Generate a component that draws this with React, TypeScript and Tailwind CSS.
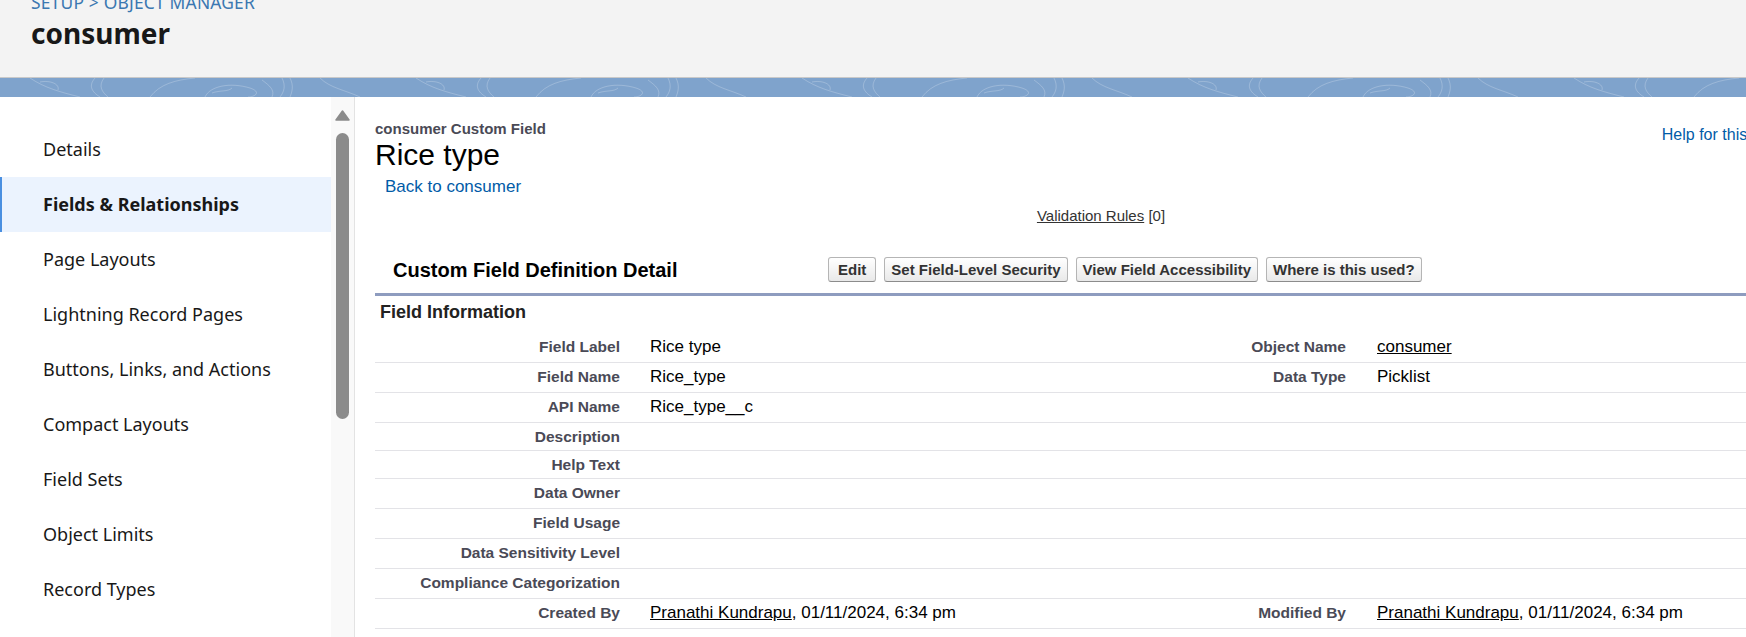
import React from 'react';

const navItems = [
  'Details',
  'Fields & Relationships',
  'Page Layouts',
  'Lightning Record Pages',
  'Buttons, Links, and Actions',
  'Compact Layouts',
  'Field Sets',
  'Object Limits',
  'Record Types',
];

type Row = {
  label: string;
  value?: React.ReactNode;
  label2?: string;
  value2?: React.ReactNode;
  h: string;
};

const created = (
  <>
    <span className="underline">Pranathi Kundrapu</span>, 01/11/2024, 6:34 pm
  </>
);

const rows: Row[] = [
  { label: 'Field Label', value: 'Rice type', label2: 'Object Name', value2: <span className="underline">consumer</span>, h: 'h-[30px]' },
  { label: 'Field Name', value: 'Rice_type', label2: 'Data Type', value2: 'Picklist', h: 'h-[30px]' },
  { label: 'API Name', value: 'Rice_type__c', h: 'h-[30px]' },
  { label: 'Description', h: 'h-[28px]' },
  { label: 'Help Text', h: 'h-[28px]' },
  { label: 'Data Owner', h: 'h-[30px]' },
  { label: 'Field Usage', h: 'h-[30px]' },
  { label: 'Data Sensitivity Level', h: 'h-[30px]' },
  { label: 'Compliance Categorization', h: 'h-[30px]' },
  { label: 'Created By', value: created, label2: 'Modified By', value2: created, h: 'h-[30px]' },
];

const buttons = [
  { label: 'Edit', pad: 'px-[9px]' },
  { label: 'Set Field-Level Security', pad: 'px-[6px]' },
  { label: 'View Field Accessibility', pad: 'px-[6px]' },
  { label: 'Where is this used?', pad: 'px-[6px]' },
];

const Band: React.FC = () => (
  <div className="h-[20px] bg-[#7fa3cc] border-t border-[#c9c9c9] overflow-hidden">
    <svg width="1746" height="19" className="block">
      <defs>
        <pattern id="swirl" width="386" height="19" patternUnits="userSpaceOnUse">
          <g fill="none" stroke="#ffffff" strokeOpacity="0.22" strokeWidth="1">
            <path d="M30 0 C 45 10, 60 14, 80 19" />
            <path d="M95 0 C 88 8, 92 14, 100 19" />
            <path d="M104 0 C 98 8, 102 14, 108 19" />
            <path d="M150 19 C 160 6, 175 2, 195 0" />
            <path d="M205 19 C 210 8, 230 4, 250 10 C 262 14, 255 19, 248 19" />
            <path d="M262 2 C 270 8, 275 12, 272 19" />
            <path d="M282 0 C 286 8, 284 14, 280 19" />
            <path d="M290 0 C 294 8, 292 14, 290 19" />
            <path d="M320 0 C 330 10, 345 12, 360 19" />
            <path d="M40 4 C 50 2, 60 6, 58 12" />
            <path d="M212 15 C 220 12, 228 14, 232 10" />
          </g>
        </pattern>
      </defs>
      <rect width="1746" height="19" fill="url(#swirl)" />
    </svg>
  </div>
);

export default function App() {
  return (
    <div className="w-[1746px] h-[637px] overflow-hidden bg-white">
      {/* top header */}
      <div className="h-[77px] bg-[#f3f3f3] pl-[31px] overflow-hidden font-['Noto_Sans',sans-serif]">
        <div className="-mt-[8px] text-[17.4px] leading-[20px] text-[#3b78b1] tracking-[0.2px]">SETUP &gt; OBJECT MANAGER</div>
        <div className="mt-[3px] text-[28px] leading-[36px] font-bold text-[#181818]">consumer</div>
      </div>
      <Band />

      <div className="flex">
        {/* object manager nav */}
        <div className="w-[331px] shrink-0 pt-[25px] font-['Noto_Sans',sans-serif]">
          {navItems.map((item) => {
            const active = item === 'Fields & Relationships';
            return (
              <div
                key={item}
                className={
                  active
                    ? 'h-[55px] flex items-center pl-[41px] bg-[#ebf3fe] border-l-2 border-[#4a8fe0] text-[18px] font-bold text-[#181818]'
                    : 'h-[55px] flex items-center pl-[43px] text-[18px] text-[#181818]'
                }
              >
                {item}
              </div>
            );
          })}
        </div>

        {/* scrollbar */}
        <div className="w-[23px] shrink-0 h-[541px] bg-[#f9f9f9] flex flex-col items-center pt-[13px]">
          <svg width="15" height="11" viewBox="0 0 15 11">
            <path d="M7.5 1 L14 10 L1 10 Z" fill="#8b8b8b" stroke="#8b8b8b" strokeWidth="1.5" strokeLinejoin="round" />
          </svg>
          <div className="mt-[12px] w-[13px] h-[286px] rounded-full bg-[#8b8b8b]" />
        </div>

        {/* main */}
        <div className="border-l border-[#e3e3e3] pl-[20px] shrink-0 font-['Liberation_Sans',Arial,sans-serif]">
          <div className="w-[1452px]">
            <div className="flex justify-between items-start pt-[23px]">
              <div>
                <div className="text-[15px] leading-[18px] font-bold text-[#4a4a56]">consumer Custom Field</div>
                <div className="text-[30px] leading-[34px] text-black">Rice type</div>
                <div className="mt-[5px] pl-[10px] text-[17px] leading-[20px] text-[#015ba7]">Back to consumer</div>
              </div>
              <div className="pt-[5px] flex items-center gap-[5px] pr-[17px] text-[16px] leading-[20px] text-[#015ba7]">
                <span>Help for this Page</span>
                <span className="w-[16px] h-[16px] rounded-full bg-[#e07a1f] text-white text-[12px] leading-[16px] font-bold text-center">?</span>
              </div>
            </div>

            <div className="mt-[10px] text-center text-[15px] leading-[18px] text-[#333]">
              <span className="underline">Validation Rules</span> [0]
            </div>

            {/* page block header */}
            <div className="mt-[32px] flex items-center pb-[11px] border-b-[3px] border-[#8e9cbf]">
              <div className="w-[453px] pl-[18px] text-[20px] leading-[24px] font-bold text-black">Custom Field Definition Detail</div>
              <div className="flex gap-[8px]">
                {buttons.map((b) => (
                  <button
                    key={b.label}
                    className={`h-[25px] ${b.pad} rounded-[3px] border border-[#b5b5b5] border-b-[#8c8c8c] bg-linear-to-b from-white to-[#e9e9e9] text-[15px] leading-[17px] font-bold text-[#333]`}
                  >
                    {b.label}
                  </button>
                ))}
              </div>
            </div>

            <div className="pt-[5px] pl-[5px] text-[18px] leading-[22px] font-bold text-[#222]">Field Information</div>

            <div className="mt-[10px]">
              {rows.map((r) => (
                <div key={r.label} className={`flex ${r.h} border-b border-[#e3e3e7] pt-[4px]`}>
                  <div className="w-[261px] shrink-0 pr-4 text-right text-[15.5px] leading-[20px] font-bold text-[#4a4a56]">{r.label}</div>
                  <div className="w-[465px] shrink-0 pl-[14px] text-[17px] leading-[20px] text-black">{r.value}</div>
                  <div className="w-[261px] shrink-0 pr-4 text-right text-[15.5px] leading-[20px] font-bold text-[#4a4a56]">{r.label2}</div>
                  <div className="flex-1 pl-[15px] text-[17px] leading-[20px] text-black">{r.value2}</div>
                </div>
              ))}
            </div>
          </div>
        </div>
      </div>
    </div>
  );
}
